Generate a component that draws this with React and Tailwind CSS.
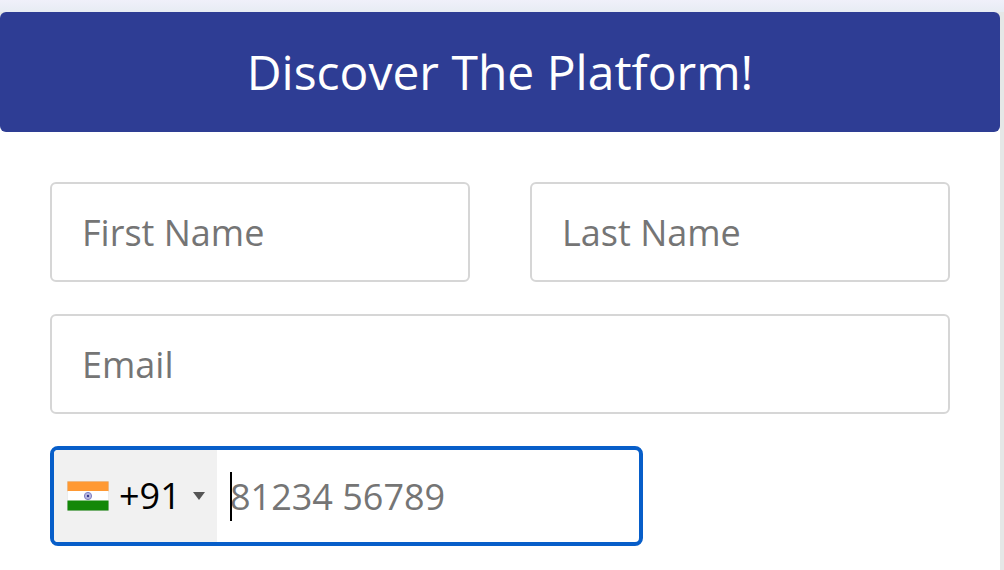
const fieldClass =
  "h-[100px] w-full min-w-0 rounded-md border-2 border-[#d6d6d6] bg-white px-[30px] text-4xl text-black outline-none placeholder:text-[#757575]";

function Field({ id, label, type = "text" }) {
  return <input id={id} type={type} aria-label={label} placeholder={label} className={fieldClass} />;
}

function IndiaFlag() {
  return (
    <svg viewBox="0 0 42 30" className="h-[30px] w-[42px] shrink-0" aria-hidden="true">
      <rect width="42" height="30" rx="1" fill="#d9d9d9" />
      <rect x="0.5" y="0.5" width="41" height="10" fill="#ff9933" />
      <rect x="0.5" y="10" width="41" height="10" fill="#ffffff" />
      <rect x="0.5" y="19.5" width="41" height="10" fill="#138808" />
      <circle cx="21" cy="15" r="3.6" fill="#b9b9e2" stroke="#8080c2" strokeWidth="1" />
      <circle cx="21" cy="15" r="1.2" fill="#35358c" />
    </svg>
  );
}

function PhoneField() {
  return (
    <div className="flex h-[100px] w-[593px] max-w-full overflow-hidden rounded-lg border-4 border-[#075ec9] bg-white">
      <div className="flex w-[163px] shrink-0 items-center bg-[#f1f1f1] pl-[13px]">
        <IndiaFlag />
        <select
          id="country"
          aria-label="Country code"
          defaultValue="+91"
          className="ml-[10px] h-full w-[64px] appearance-none bg-transparent text-4xl text-black outline-none"
        >
          <option value="+91">+91</option>
        </select>
        <svg viewBox="0 0 12 8" className="ml-[10px] h-2 w-3 shrink-0" aria-hidden="true">
          <path d="M0 0h12L6 8z" fill="#555555" />
        </svg>
      </div>
      <div className="relative flex min-w-0 flex-1 items-center">
        <input
          id="phone"
          type="tel"
          aria-label="Phone number"
          placeholder="81234 56789"
          className="h-full w-full min-w-0 bg-transparent pl-[13px] text-4xl text-black outline-none placeholder:text-[#757575]"
        />
        <span className="absolute left-[13px] h-[49px] w-0.5 bg-black" aria-hidden="true" />
      </div>
    </div>
  );
}

export default function App() {
  return (
    <div className="flex min-h-screen flex-col bg-[#e5e7e6] font-['Open_Sans','Noto_Sans',sans-serif]">
      <div className="h-3 bg-linear-to-b from-[#f0f0fa] to-[#e7ecf3]" />
      <main className="mr-1 flex-1 rounded-t-md bg-white">
        <header className="flex h-[120px] items-center justify-center rounded-md bg-[#2e3d94]">
          <h1 className="text-5xl text-white">Discover The Platform!</h1>
        </header>
        <form className="flex flex-col gap-8 px-[50px] pt-[50px] pb-6">
          <div className="grid grid-cols-2 gap-[60px]">
            <Field id="first-name" label="First Name" />
            <Field id="last-name" label="Last Name" />
          </div>
          <Field id="email" label="Email" type="email" />
          <PhoneField />
        </form>
      </main>
    </div>
  );
}
